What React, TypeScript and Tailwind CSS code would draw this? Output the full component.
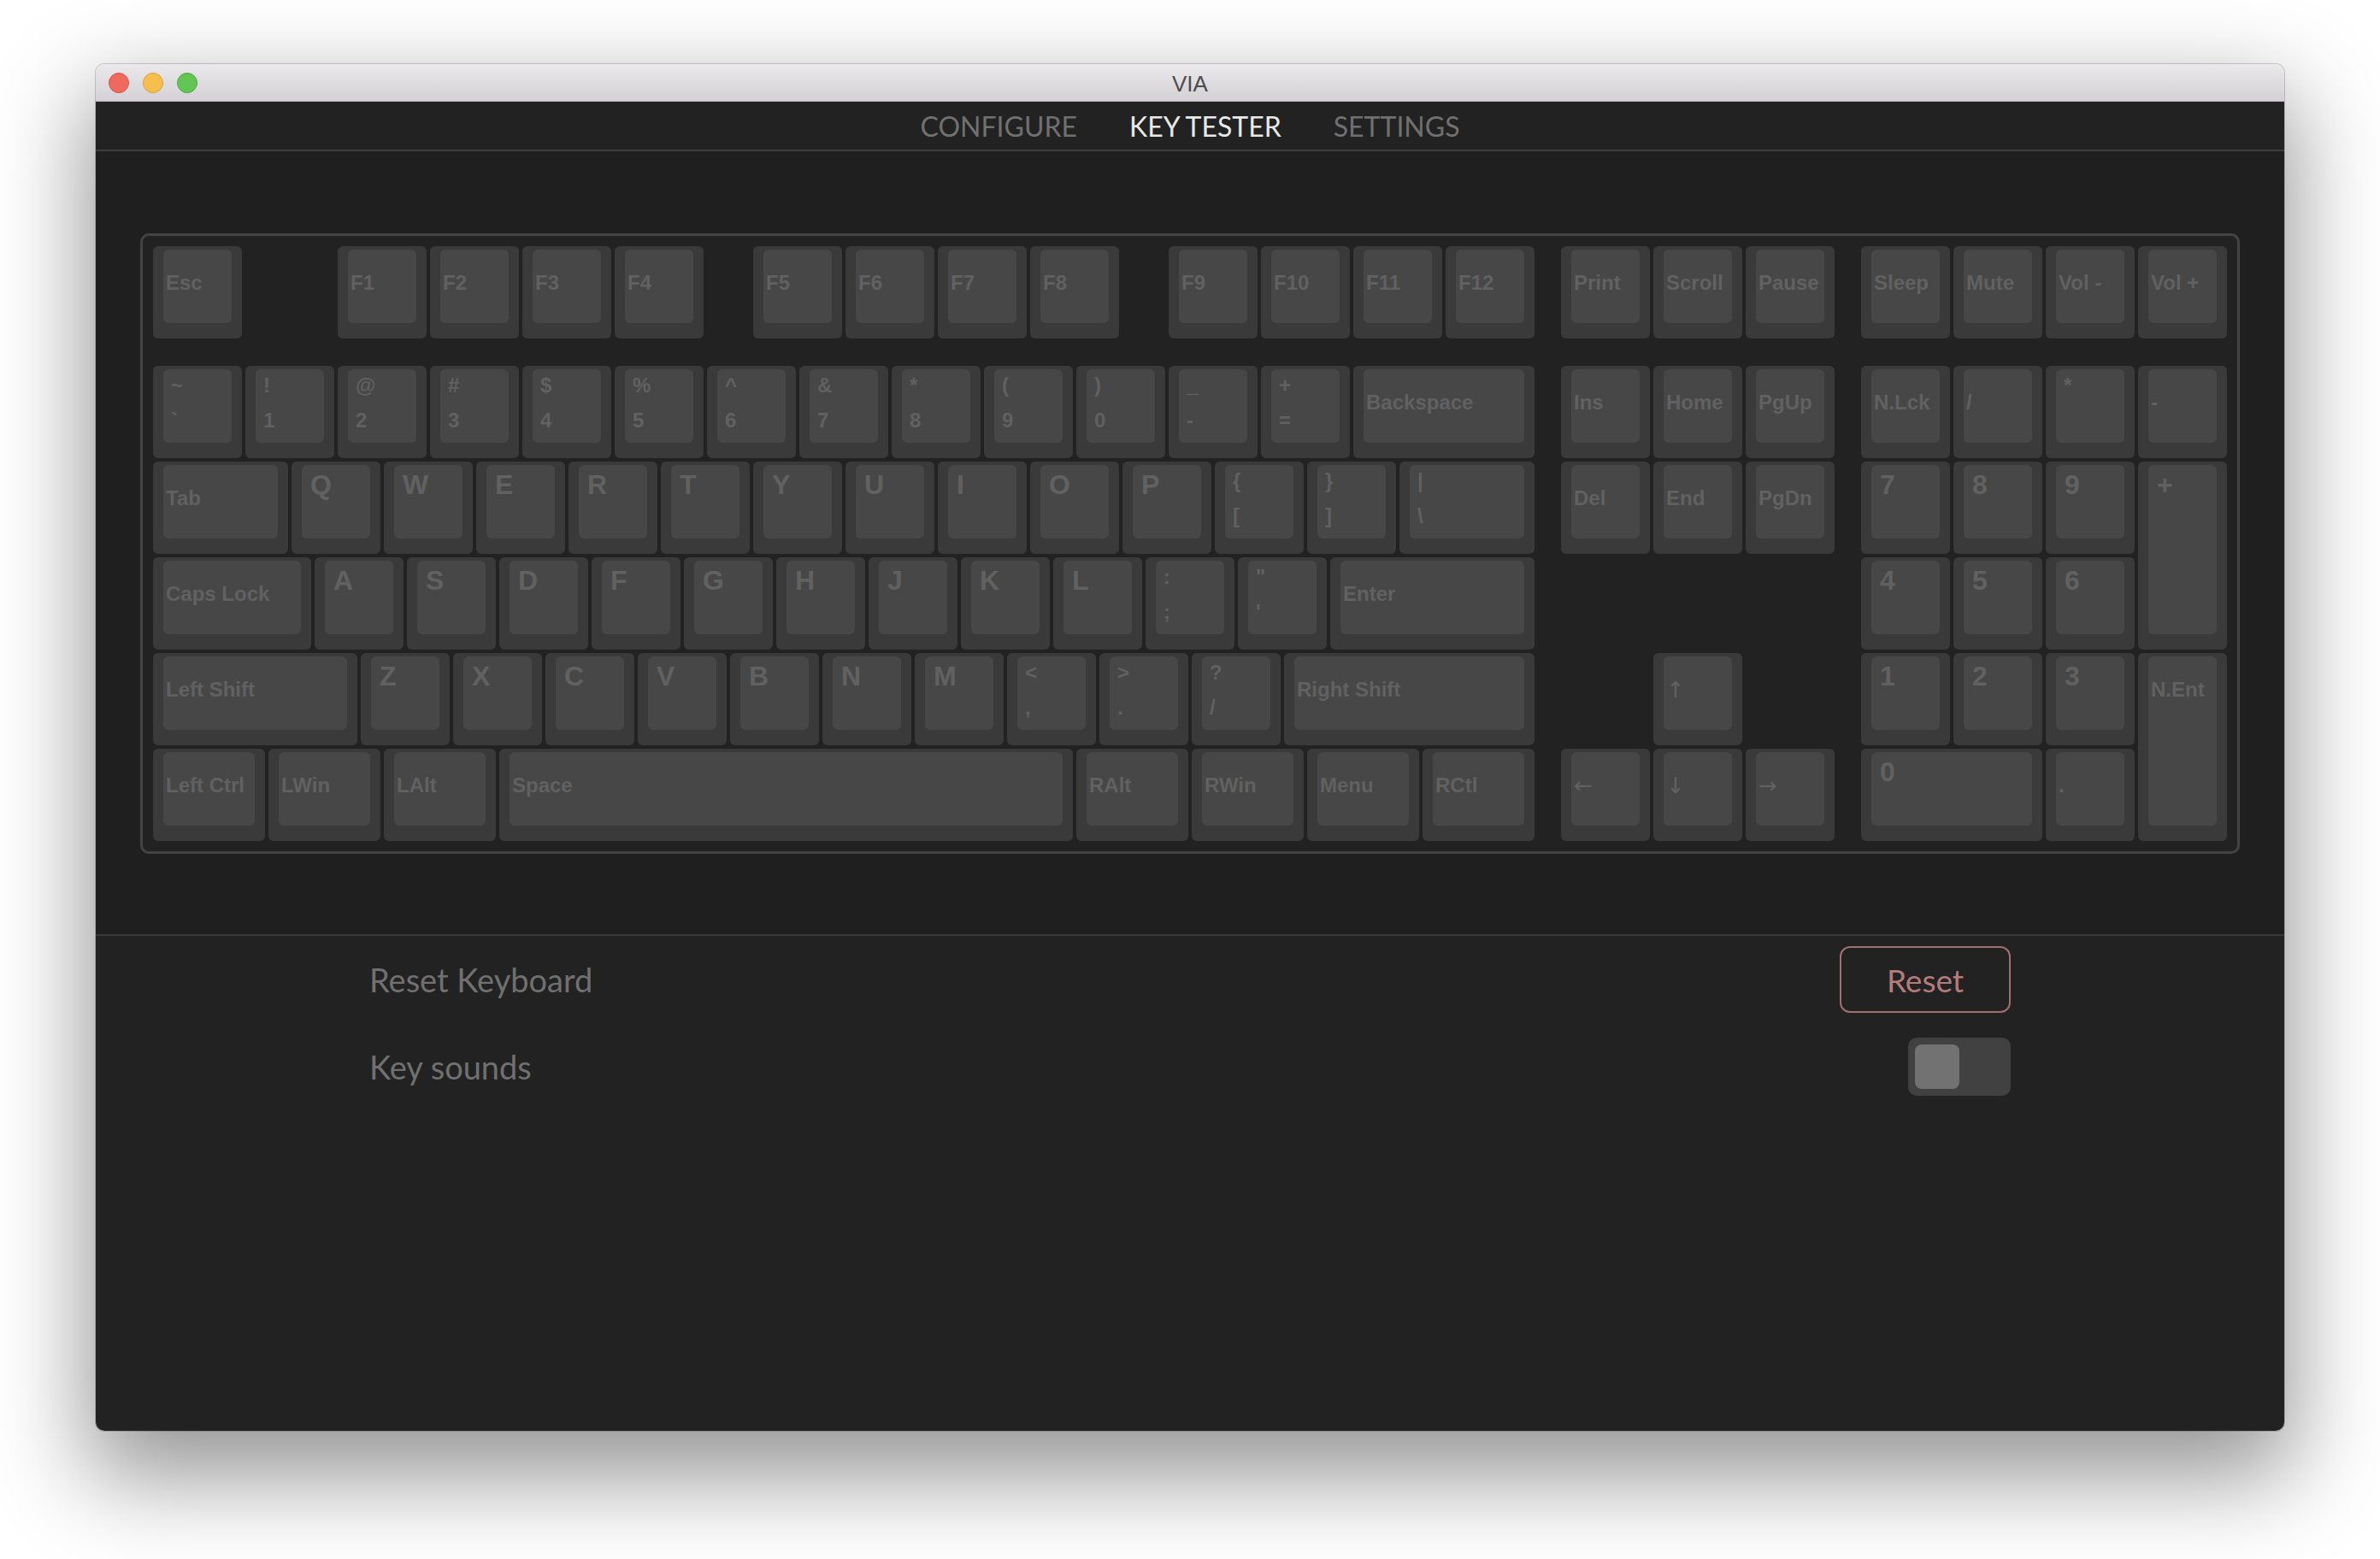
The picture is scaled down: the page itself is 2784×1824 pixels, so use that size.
import React from "react";

type Kind = "s" | "l" | "d" | "a";

interface KeyDef {
  x: number;
  r: number;
  w?: number;
  h?: number;
  t: Kind;
  a: string;
  b?: string;
}

// grid rows: 1 = F-row, 2 = spacer, 3..7 = main rows
const S = (x: number, r: number, a: string, w = 1, h = 1): KeyDef => ({ x, r, a, w, h, t: "s" });
const L = (x: number, r: number, a: string, w = 1, h = 1): KeyDef => ({ x, r, a, w, h, t: "l" });
const D = (x: number, r: number, a: string, b: string, w = 1): KeyDef => ({ x, r, a, b, w, h: 1, t: "d" });
const A = (x: number, r: number, a: string): KeyDef => ({ x, r, a, w: 1, h: 1, t: "a" });

const KEYS: KeyDef[] = [
  // F row
  S(0, 1, "Esc"),
  S(2, 1, "F1"), S(3, 1, "F2"), S(4, 1, "F3"), S(5, 1, "F4"),
  S(6.5, 1, "F5"), S(7.5, 1, "F6"), S(8.5, 1, "F7"), S(9.5, 1, "F8"),
  S(11, 1, "F9"), S(12, 1, "F10"), S(13, 1, "F11"), S(14, 1, "F12"),
  S(15.25, 1, "Print"), S(16.25, 1, "Scroll"), S(17.25, 1, "Pause"),
  S(18.5, 1, "Sleep"), S(19.5, 1, "Mute"), S(20.5, 1, "Vol -"), S(21.5, 1, "Vol +"),

  // number row
  D(0, 3, "~", "`"), D(1, 3, "!", "1"), D(2, 3, "@", "2"), D(3, 3, "#", "3"),
  D(4, 3, "$", "4"), D(5, 3, "%", "5"), D(6, 3, "^", "6"), D(7, 3, "&", "7"),
  D(8, 3, "*", "8"), D(9, 3, "(", "9"), D(10, 3, ")", "0"), D(11, 3, "_", "-"),
  D(12, 3, "+", "="), S(13, 3, "Backspace", 2),
  S(15.25, 3, "Ins"), S(16.25, 3, "Home"), S(17.25, 3, "PgUp"),
  S(18.5, 3, "N.Lck"), S(19.5, 3, "/"), D(20.5, 3, "*", ""), S(21.5, 3, "-"),

  // qwerty row
  S(0, 4, "Tab", 1.5),
  L(1.5, 4, "Q"), L(2.5, 4, "W"), L(3.5, 4, "E"), L(4.5, 4, "R"), L(5.5, 4, "T"),
  L(6.5, 4, "Y"), L(7.5, 4, "U"), L(8.5, 4, "I"), L(9.5, 4, "O"), L(10.5, 4, "P"),
  D(11.5, 4, "{", "["), D(12.5, 4, "}", "]"), D(13.5, 4, "|", "\\", 1.5),
  S(15.25, 4, "Del"), S(16.25, 4, "End"), S(17.25, 4, "PgDn"),
  L(18.5, 4, "7"), L(19.5, 4, "8"), L(20.5, 4, "9"), L(21.5, 4, "+", 1, 2),

  // home row
  S(0, 5, "Caps Lock", 1.75),
  L(1.75, 5, "A"), L(2.75, 5, "S"), L(3.75, 5, "D"), L(4.75, 5, "F"), L(5.75, 5, "G"),
  L(6.75, 5, "H"), L(7.75, 5, "J"), L(8.75, 5, "K"), L(9.75, 5, "L"),
  D(10.75, 5, ":", ";"), D(11.75, 5, "\"", "'"), S(12.75, 5, "Enter", 2.25),
  L(18.5, 5, "4"), L(19.5, 5, "5"), L(20.5, 5, "6"),

  // shift row
  S(0, 6, "Left Shift", 2.25),
  L(2.25, 6, "Z"), L(3.25, 6, "X"), L(4.25, 6, "C"), L(5.25, 6, "V"), L(6.25, 6, "B"),
  L(7.25, 6, "N"), L(8.25, 6, "M"),
  D(9.25, 6, "<", ","), D(10.25, 6, ">", "."), D(11.25, 6, "?", "/"),
  S(12.25, 6, "Right Shift", 2.75),
  A(16.25, 6, "↑"),
  L(18.5, 6, "1"), L(19.5, 6, "2"), L(20.5, 6, "3"), S(21.5, 6, "N.Ent", 1, 2),

  // bottom row
  S(0, 7, "Left Ctrl", 1.25), S(1.25, 7, "LWin", 1.25), S(2.5, 7, "LAlt", 1.25),
  S(3.75, 7, "Space", 6.25),
  S(10, 7, "RAlt", 1.25), S(11.25, 7, "RWin", 1.25), S(12.5, 7, "Menu", 1.25), S(13.75, 7, "RCtl", 1.25),
  A(15.25, 7, "←"), A(16.25, 7, "↓"), A(17.25, 7, "→"),
  L(18.5, 7, "0", 2), S(20.5, 7, "."),
];

function KeyLabel({ k }: { k: KeyDef }) {
  if (k.t === "l") {
    return <div className="pl-[10px] pt-[7px] text-[32px] leading-[32px] font-bold">{k.a}</div>;
  }
  if (k.t === "d") {
    return (
      <div className="pl-[9px] pt-[7px] flex flex-col gap-[17px] text-[24px] leading-[24px] font-bold">
        <span className="h-[24px]">{k.a}</span>
        <span className="h-[24px]">{k.b}</span>
      </div>
    );
  }
  if (k.t === "a") {
    return <div className="pl-[3px] pt-[26px] text-[26px] leading-[26px] font-['DejaVu_Sans',sans-serif]">{k.a}</div>;
  }
  return <div className="pl-[3px] pt-[27px] text-[24px] leading-[24px] font-bold whitespace-nowrap">{k.a}</div>;
}

function Key({ k }: { k: KeyDef }) {
  return (
    <div
      className="pr-[4px] pb-[4px]"
      style={{ gridColumn: `${k.x * 4 + 1} / span ${(k.w ?? 1) * 4}`, gridRow: `${k.r} / span ${k.h ?? 1}` }}
    >
      <div className="h-full flex rounded-[6px] bg-[#3a3a3a] pt-[4px] px-[12px] pb-[18px]">
        <div className="flex-1 rounded-[6px] bg-[#474747] text-[#616161] overflow-hidden">
          <KeyLabel k={k} />
        </div>
      </div>
    </div>
  );
}

export default function App() {
  return (
    <div className="w-[2784px] h-[1824px] bg-white pl-[112px] pt-[75px] font-['Lato',sans-serif]">
      <div className="w-[2560px] h-[1599px] rounded-[10px] overflow-hidden flex flex-col shadow-[0_44px_110px_10px_rgba(0,0,0,0.42),0_0_0_1px_rgba(0,0,0,0.18)]">
        {/* title bar */}
        <div className="h-[44px] shrink-0 relative flex items-center justify-center pt-[4px] bg-gradient-to-b from-[#ebe9eb] to-[#d3d1d3] border-b border-[#b4b4b4]">
          <div className="absolute left-[15px] top-[10px] flex gap-[16px]">
            <span className="w-[24px] h-[24px] rounded-full bg-[#ee6a5f] border border-[#d5554a]" />
            <span className="w-[24px] h-[24px] rounded-full bg-[#f5be4f] border border-[#d8a03c]" />
            <span className="w-[24px] h-[24px] rounded-full bg-[#62c555] border border-[#4ca73f]" />
          </div>
          <span className="text-[26px] text-[#4d4d4d] font-['Liberation_Sans',sans-serif]">VIA</span>
        </div>

        {/* nav */}
        <div className="h-[58px] shrink-0 bg-[#222222] border-b-2 border-[#3c3c3c] flex items-center justify-center gap-[61px] pt-[2px] text-[32px] leading-none">
          <span className="text-[#707070]">CONFIGURE</span>
          <span className="text-[#e8e8e8]">KEY TESTER</span>
          <span className="text-[#707070]">SETTINGS</span>
        </div>

        {/* keyboard */}
        <div className="h-[916px] shrink-0 bg-[#1f1f1f] flex justify-center pt-[96px]">
          <div className="self-start border-[3px] border-[#444444] rounded-[10px] bg-[#222222] pl-[12px] pt-[12px] pr-[8px] pb-[8px] font-['Liberation_Sans',Arial,sans-serif]">
            <div className="grid grid-cols-[repeat(90,27px)] grid-rows-[112px_28px_repeat(5,112px)]">
              {KEYS.map((k, i) => (
                <Key key={i} k={k} />
              ))}
            </div>
          </div>
        </div>

        {/* settings */}
        <div className="flex-1 bg-[#222222] border-t-2 border-[#3a3a3a] px-[320px] text-[38px] leading-none">
          <div className="h-[102px] flex items-center justify-between">
            <span className="text-[#707070]">Reset Keyboard</span>
            <button className="w-[200px] h-[78px] rounded-[12px] border-2 border-[#a26e6e] text-[#b57b7b] text-[37px]">Reset</button>
          </div>
          <div className="h-[102px] flex items-center justify-between">
            <span className="text-[#707070]">Key sounds</span>
            <div className="w-[120px] h-[68px] rounded-[10px] bg-[#414141] p-[8px]">
              <div className="w-[52px] h-[52px] rounded-[8px] bg-[#727272]" />
            </div>
          </div>
        </div>
      </div>
    </div>
  );
}
